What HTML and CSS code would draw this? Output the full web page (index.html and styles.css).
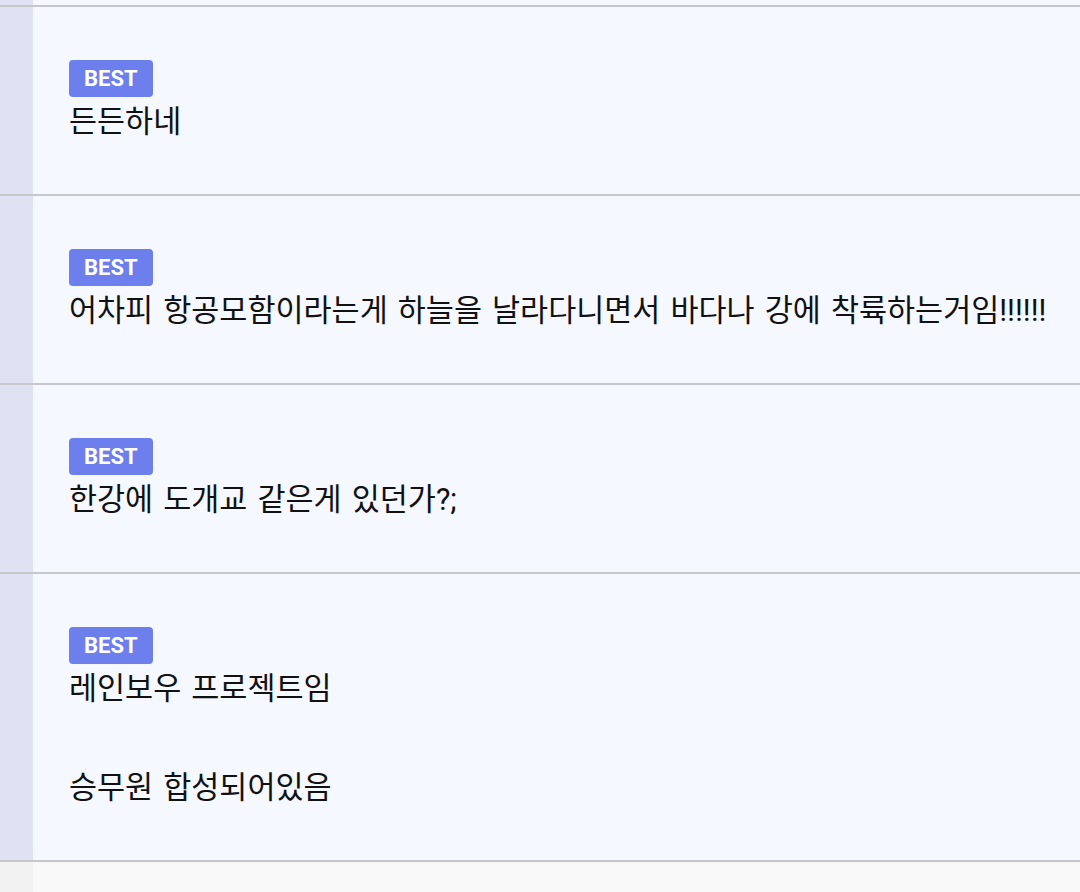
FILE: index.html
```html
<!DOCTYPE html>
<html lang="ko">
<head>
  <meta charset="UTF-8" />
  <meta name="viewport" content="width=device-width, initial-scale=1.0"/>
  <title>Best Comments</title>
  <link rel="stylesheet" href="styles.css">
</head>
<body>
  <div class="peek"><div class="rail"></div><div class="body"></div></div>
  <ul class="comments">
    <li class="comment">
      <div class="rail"></div>
      <div class="body">
        <span class="badge">BEST</span>
        <p class="text">든든하네</p>
      </div>
    </li>
    <li class="comment">
      <div class="rail"></div>
      <div class="body">
        <span class="badge">BEST</span>
        <p class="text">어차피 항공모함이라는게 하늘을 날라다니면서 바다나 강에 착륙하는거임!!!!!!</p>
      </div>
    </li>
    <li class="comment">
      <div class="rail"></div>
      <div class="body">
        <span class="badge">BEST</span>
        <p class="text">한강에 도개교 같은게 있던가?;</p>
      </div>
    </li>
    <li class="comment">
      <div class="rail"></div>
      <div class="body">
        <span class="badge">BEST</span>
        <p class="text">레인보우 프로젝트임<br><br>승무원 합성되어있음</p>
      </div>
    </li>
    <li class="comment plain">
      <div class="rail"></div>
      <div class="body"></div>
    </li>
  </ul>
</body>
</html>
```

FILE: styles.css
```css
body {
  margin: 0;
  font-family: Roboto, "Noto Sans CJK KR", sans-serif;
  background: #f9f9f9;
  color: #111;
}

.peek {
  display: flex;
  height: 4.5px;
  border-bottom: 2px solid #c5c7cb;
}

.rail {
  width: 33px;
  flex-shrink: 0;
  background: #dfe2f3;
}

.body {
  flex: 1;
  background: #f5f8fe;
  padding: 53px 20px 47.5px 36px;
}

.peek .body {
  padding: 0;
}

.comments {
  list-style: none;
  margin: 0;
  padding: 0;
}

.comment {
  display: flex;
  border-bottom: 2px solid #c5c7cb;
}

.comment.plain {
  border-bottom: none;
  height: 40px;
}

.comment.plain .rail {
  background: #f2f2f2;
}

.comment.plain .body {
  background: #f9f9f9;
  padding: 0;
}

.badge {
  display: inline-block;
  height: 37px;
  line-height: 37px;
  padding: 0 15px;
  border-radius: 4px;
  background: #6c7fec;
  color: #fff;
  font-size: 22px;
  font-weight: bold;
  vertical-align: top;
}

.text {
  margin: 0;
  font-size: 30.5px;
  word-spacing: 2.5px;
  line-height: 49.5px;
  font-family: Roboto, "Noto Sans CJK KR", sans-serif;
}
```
